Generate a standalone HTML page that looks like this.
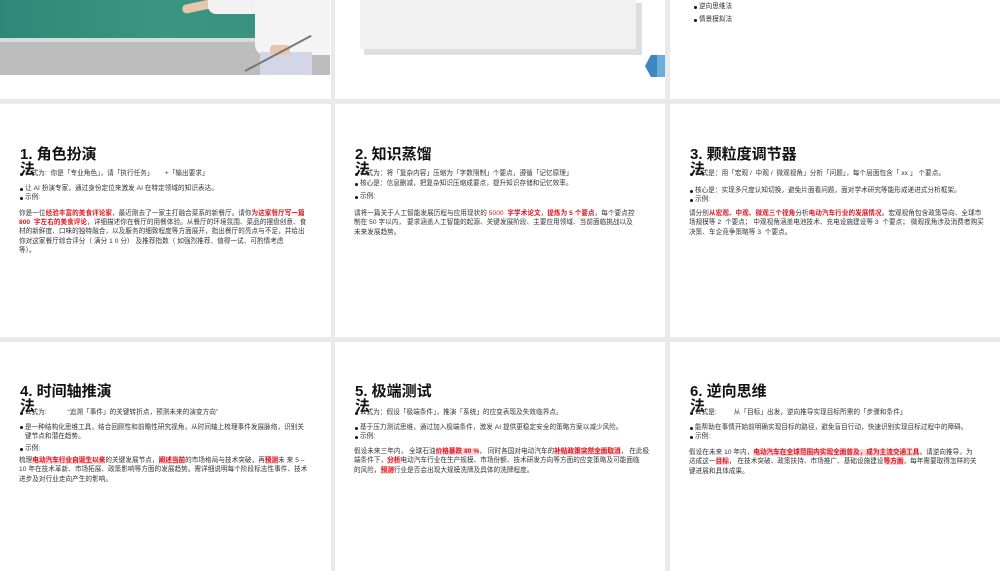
<!DOCTYPE html>
<html><head><meta charset="utf-8"><style>
*{margin:0;padding:0;box-sizing:border-box}
body{width:1000px;height:571px;background:#e9e9e9;position:relative;overflow:hidden;font-family:"Liberation Sans","Noto Sans CJK SC",sans-serif;color:#222}
.s{position:absolute;background:#fff;overflow:hidden}
.t{position:absolute;left:20px;font-size:15px;font-weight:bold;line-height:15px;color:#111}
.l{position:absolute;white-space:nowrap;font-size:6.6px;line-height:8px;letter-spacing:0.05px;color:#333}
.b::before{content:"";position:absolute;left:-5px;top:2.5px;width:3px;height:3px;border-radius:50%;background:#111}
.r{color:#e0141e;font-weight:bold}
.h{color:#e0141e;font-weight:bold;background:#fbd5d7}
</style></head><body>
<!-- top row -->
<div class="s" style="left:0;top:0;width:331px;height:99px">
 <div style="position:absolute;left:0;top:0;width:330px;height:40px;background:linear-gradient(90deg,#2f8877,#3a9582 50%,#3b8f80)"></div>
 <div style="position:absolute;left:0;top:38px;width:330px;height:4px;background:#d8dcd8"></div>
 <div style="position:absolute;left:0;top:42px;width:330px;height:33px;background:#bdbdbd"></div>
 <div style="position:absolute;left:182px;top:2px;width:32px;height:9px;background:#e6c6ac;border-radius:5px;transform:rotate(-12deg)"></div>
 <div style="position:absolute;left:208px;top:0;width:55px;height:14px;background:#f2f2f2;border-radius:0 0 6px 8px"></div>
 <div style="position:absolute;left:255px;top:0;width:75px;height:55px;background:#f4f4f4;border-radius:0 0 0 10px"></div>
 <div style="position:absolute;left:260px;top:52px;width:52px;height:23px;background:#d3d6e6"></div>
 <div style="position:absolute;left:270px;top:45px;width:20px;height:10px;background:#e6c6ac;border-radius:4px"></div>
 <div style="position:absolute;left:245px;top:70px;width:75px;height:2px;background:#777;transform:rotate(-28deg);transform-origin:left center"></div>
</div>
<div class="s" style="left:335px;top:0;width:330px;height:99px">
 <div style="position:absolute;left:29px;top:3px;width:278px;height:52px;background:#dedede"></div>
 <div style="position:absolute;left:25px;top:0;width:276px;height:49px;background:#f1f1f1"></div>
 <svg style="position:absolute;left:310px;top:55px" width="20" height="22" viewBox="0 0 20 22"><polygon points="6,0 20,0 20,22 6,22 0,11" fill="#6aaedc"/><polygon points="6,0 12,0 12,22 6,22 0,11" fill="#3f88bf"/></svg>
</div>
<div class="s" style="left:670px;top:0;width:330px;height:99px">
 <div class="l b" style="left:29px;top:3px">逆向思维法</div>
 <div class="l b" style="left:29px;top:16px">情景模拟法</div>
</div>

<!-- row 2 -->
<div class="s" style="left:0;top:104px;width:331px;height:233px">
 <div class="t" style="top:43px">1. 角色扮演<br>法</div>
 <div class="l b" style="left:25px;top:66px">公式为:&nbsp; 你是「专业角色」，请「执行任务」&nbsp;&nbsp;&nbsp;&nbsp;&nbsp; +「输出要求」</div>
 <div class="l b" style="left:25px;top:81px">让 AI 扮演专家，通过身份定位来激发 AI 在特定领域的知识表达。</div>
 <div class="l b" style="left:25px;top:90px">示例:</div>
 <div class="l" style="left:19px;top:105px;line-height:9.2px">你是一位<span class="r">经验丰富的美食评论家</span>，最近刚去了一家主打融合菜系的新餐厅。请你<span class="r">为这家餐厅写一篇</span><br><span class="r">800 &nbsp;字左右的美食评论</span>，详细描述你在餐厅的用餐体验。从餐厅的环境氛围、菜品的摆盘创意、食<br>材的新鲜度、口味的独特融合，以及服务的细致程度等方面展开，指出餐厅的亮点与不足，并给出<br>你对这家餐厅综合评分（ 满分 1 0 分） 及推荐指数（ 如强烈推荐、值得一试、可酌情考虑<br>等）。</div>
</div>
<div class="s" style="left:335px;top:104px;width:330px;height:233px">
 <div class="t" style="top:43px">2. 知识蒸馏<br>法</div>
 <div class="l b" style="left:25px;top:66px">公式为：将「复杂内容」压缩为「字数限制」个要点，遵循「记忆原理」</div>
 <div class="l b" style="left:25px;top:76px">核心是：信息删减，把复杂知识压缩成要点，提升知识存储和记忆效率。</div>
 <div class="l b" style="left:25px;top:89px">示例:</div>
 <div class="l" style="left:19px;top:105px;line-height:9.4px">请将一篇关于人工智能发展历程与应用现状的 <span style="color:#e0141e">5000</span> &nbsp;<span class="r">字学术论文</span>，<span class="r">提炼为 5 个要点</span>，每个要点控<br>制在 50 字以内， 要求涵盖人工智能的起源、关键发展阶段、主要应用领域、当前面临挑战以及<br>未来发展趋势。</div>
</div>
<div class="s" style="left:670px;top:104px;width:330px;height:233px">
 <div class="t" style="top:43px">3. 颗粒度调节器<br>法</div>
 <div class="l b" style="left:25px;top:66px">公式是：用「宏观 / &nbsp;中观 / &nbsp;微观视角」分析「问题」，每个层面包含「 xx 」 个要点。</div>
 <div class="l b" style="left:25px;top:83px">核心是：实现多尺度认知切换，避免片面看问题，面对学术研究等能形成递进式分析框架。</div>
 <div class="l b" style="left:25px;top:92px">示例:</div>
 <div class="l" style="left:19px;top:105px;line-height:9.3px">请分别<span class="r">从宏观、中观、微观三个视角</span>分析<span class="r">电动汽车行业的发展情况</span>。宏观视角包含政策导向、全球市<br>场规模等 2 &nbsp;个要点； 中观视角涵盖电池技术、充电设施建设等 3 &nbsp;个要点； 微观视角涉及消费者购买<br>决策、车企竞争策略等 3 &nbsp;个要点。</div>
</div>

<!-- row 3 -->
<div class="s" style="left:0;top:342px;width:331px;height:229px">
 <div class="t" style="top:42px">4. 时间轴推演<br>法</div>
 <div class="l b" style="left:25px;top:67px">公式为:&nbsp;&nbsp;&nbsp;&nbsp;&nbsp;&nbsp;&nbsp;&nbsp;&nbsp;&nbsp; “追溯「事件」的关键转折点，预测未来的演变方向”</div>
 <div class="l b" style="left:25px;top:81px;line-height:9px">是一种结构化思维工具，结合回顾性和前瞻性研究视角，从时间轴上梳理事件发展脉络，识别关<br>键节点和潜在趋势。</div>
 <div class="l b" style="left:25px;top:103px">示例:</div>
 <div class="l" style="left:19px;top:114px;line-height:9.4px">梳理<span class="h">电动汽车行业自诞生以来</span>的关键发展节点，<span class="h">阐述当前</span>的市场格局与技术突破，再<span class="h">预测</span>未 来 5 –<br>10 年在技术革新、市场拓展、政策影响等方面的发展趋势。需详细说明每个阶段标志性事件、技术<br>进步及对行业走向产生的影响。</div>
</div>
<div class="s" style="left:335px;top:342px;width:330px;height:229px">
 <div class="t" style="top:42px">5. 极端测试<br>法</div>
 <div class="l b" style="left:25px;top:67px">公式为：假设「极端条件」，推演「系统」的应变表现及失效临界点。</div>
 <div class="l b" style="left:25px;top:82px">基于压力测试思维，通过加入极端条件，激发 AI 提供更稳定安全的策略方案以减少风险。</div>
 <div class="l b" style="left:25px;top:91px">示例:</div>
 <div class="l" style="left:19px;top:105px;line-height:9.3px">假设未来三年内， 全球石油<span class="h">价格暴跌 80 %</span>， 同时各国对电动汽车的<span class="h">补贴政策突然全面取消</span>， 在此极<br>端条件下，<span class="h">分析</span>电动汽车行业在生产规模、市场份额、技术研发方向等方面的应变策略及可能面临<br>的风险，<span class="h">预测</span>行业是否会出现大规模洗牌及具体的洗牌程度。</div>
</div>
<div class="s" style="left:670px;top:342px;width:330px;height:229px">
 <div class="t" style="top:42px">6. 逆向思维<br>法</div>
 <div class="l b" style="left:25px;top:67px">公式是:&nbsp;&nbsp;&nbsp;&nbsp;&nbsp;&nbsp;&nbsp;&nbsp; 从「目标」出发，逆向推导实现目标所需的「步骤和条件」</div>
 <div class="l b" style="left:25px;top:82px">能帮助在事情开始前明确实现目标的路径，避免盲目行动，快速识别实现目标过程中的障碍。</div>
 <div class="l b" style="left:25px;top:91px">示例:</div>
 <div class="l" style="left:19px;top:106px;line-height:9.3px">假设在未来 10 年内，<span class="h">电动汽车在全球范围内实现全面普及，成为主流交通工具</span>。请逆向推导，为<br>达成这一<span class="h">目标</span>， 在技术突破、政策扶持、市场推广、基础设施建设<span class="h">等方面</span>，每年需要取得怎样的关<br>键进展和具体成果。</div>
</div>
</body></html>
